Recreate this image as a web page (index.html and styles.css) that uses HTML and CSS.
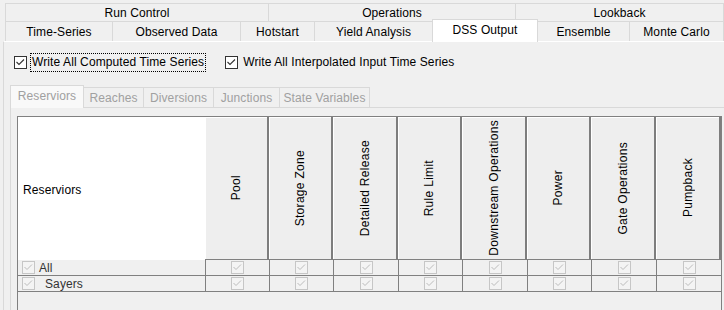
FILE: index.html
```html
<!DOCTYPE html>
<html>
<head>
<meta charset="utf-8">
<link rel="stylesheet" href="styles.css">
</head>
<body>
<div class="tabs">
  <div class="tab-row row1">
    <div class="tab">Run Control</div>
    <div class="tab">Operations</div>
    <div class="tab">Lookback</div>
  </div>
  <div class="tab-row row2">
    <div class="tab">Time-Series</div>
    <div class="tab">Observed Data</div>
    <div class="tab">Hotstart</div>
    <div class="tab">Yield Analysis</div>
    <div class="tab selected">DSS Output</div>
    <div class="tab">Ensemble</div>
    <div class="tab">Monte Carlo</div>
  </div>
</div>
<div class="panel">
  <div class="checks">
    <label class="chk">
      <span class="box"><svg width="13" height="13" viewBox="0 0 13 13"><polyline points="2.5,6 5,8.5 10,3.5" fill="none" stroke="#333" stroke-width="1.1"/></svg></span>
      <span class="lbl focus">Write All Computed Time Series</span>
    </label>
    <label class="chk">
      <span class="box"><svg width="13" height="13" viewBox="0 0 13 13"><polyline points="2.5,6 5,8.5 10,3.5" fill="none" stroke="#333" stroke-width="1.1"/></svg></span>
      <span class="lbl">Write All Interpolated Input Time Series</span>
    </label>
  </div>
  <div class="itabs">
    <div class="itab sel w1">Reserviors</div>
    <div class="itab w2">Reaches</div>
    <div class="itab w3">Diversions</div>
    <div class="itab w4">Junctions</div>
    <div class="itab w5">State Variables</div>
  </div>
  <div class="ipanel">
    <div class="scroll">
      <div class="grid">
        <div class="h first">Reserviors</div>
        <div class="h"><span class="vt">Pool</span></div>
        <div class="h"><span class="vt">Storage Zone</span></div>
        <div class="h"><span class="vt">Detailed Release</span></div>
        <div class="h"><span class="vt">Rule Limit</span></div>
        <div class="h"><span class="vt">Downstream Operations</span></div>
        <div class="h"><span class="vt">Power</span></div>
        <div class="h"><span class="vt">Gate Operations</span></div>
        <div class="h"><span class="vt">Pumpback</span></div>

        <div class="c first"><span class="dbox"><svg width="11" height="11" viewBox="0 0 11 11"><polyline points="1.5,5 4,7.5 9,2.5" fill="none" stroke="#bcbcbc" stroke-width="1"/></svg></span><span class="rtxt">All</span></div>
        <div class="c"><span class="dbox"><svg width="11" height="11" viewBox="0 0 11 11"><polyline points="1.5,5 4,7.5 9,2.5" fill="none" stroke="#bcbcbc" stroke-width="1"/></svg></span></div>
        <div class="c"><span class="dbox"><svg width="11" height="11" viewBox="0 0 11 11"><polyline points="1.5,5 4,7.5 9,2.5" fill="none" stroke="#bcbcbc" stroke-width="1"/></svg></span></div>
        <div class="c"><span class="dbox"><svg width="11" height="11" viewBox="0 0 11 11"><polyline points="1.5,5 4,7.5 9,2.5" fill="none" stroke="#bcbcbc" stroke-width="1"/></svg></span></div>
        <div class="c"><span class="dbox"><svg width="11" height="11" viewBox="0 0 11 11"><polyline points="1.5,5 4,7.5 9,2.5" fill="none" stroke="#bcbcbc" stroke-width="1"/></svg></span></div>
        <div class="c"><span class="dbox"><svg width="11" height="11" viewBox="0 0 11 11"><polyline points="1.5,5 4,7.5 9,2.5" fill="none" stroke="#bcbcbc" stroke-width="1"/></svg></span></div>
        <div class="c"><span class="dbox"><svg width="11" height="11" viewBox="0 0 11 11"><polyline points="1.5,5 4,7.5 9,2.5" fill="none" stroke="#bcbcbc" stroke-width="1"/></svg></span></div>
        <div class="c"><span class="dbox"><svg width="11" height="11" viewBox="0 0 11 11"><polyline points="1.5,5 4,7.5 9,2.5" fill="none" stroke="#bcbcbc" stroke-width="1"/></svg></span></div>
        <div class="c"><span class="dbox"><svg width="11" height="11" viewBox="0 0 11 11"><polyline points="1.5,5 4,7.5 9,2.5" fill="none" stroke="#bcbcbc" stroke-width="1"/></svg></span></div>

        <div class="c first"><span class="dbox"><svg width="11" height="11" viewBox="0 0 11 11"><polyline points="1.5,5 4,7.5 9,2.5" fill="none" stroke="#bcbcbc" stroke-width="1"/></svg></span><span class="rtxt indent">Sayers</span></div>
        <div class="c"><span class="dbox"><svg width="11" height="11" viewBox="0 0 11 11"><polyline points="1.5,5 4,7.5 9,2.5" fill="none" stroke="#bcbcbc" stroke-width="1"/></svg></span></div>
        <div class="c"><span class="dbox"><svg width="11" height="11" viewBox="0 0 11 11"><polyline points="1.5,5 4,7.5 9,2.5" fill="none" stroke="#bcbcbc" stroke-width="1"/></svg></span></div>
        <div class="c"><span class="dbox"><svg width="11" height="11" viewBox="0 0 11 11"><polyline points="1.5,5 4,7.5 9,2.5" fill="none" stroke="#bcbcbc" stroke-width="1"/></svg></span></div>
        <div class="c"><span class="dbox"><svg width="11" height="11" viewBox="0 0 11 11"><polyline points="1.5,5 4,7.5 9,2.5" fill="none" stroke="#bcbcbc" stroke-width="1"/></svg></span></div>
        <div class="c"><span class="dbox"><svg width="11" height="11" viewBox="0 0 11 11"><polyline points="1.5,5 4,7.5 9,2.5" fill="none" stroke="#bcbcbc" stroke-width="1"/></svg></span></div>
        <div class="c"><span class="dbox"><svg width="11" height="11" viewBox="0 0 11 11"><polyline points="1.5,5 4,7.5 9,2.5" fill="none" stroke="#bcbcbc" stroke-width="1"/></svg></span></div>
        <div class="c"><span class="dbox"><svg width="11" height="11" viewBox="0 0 11 11"><polyline points="1.5,5 4,7.5 9,2.5" fill="none" stroke="#bcbcbc" stroke-width="1"/></svg></span></div>
        <div class="c"><span class="dbox"><svg width="11" height="11" viewBox="0 0 11 11"><polyline points="1.5,5 4,7.5 9,2.5" fill="none" stroke="#bcbcbc" stroke-width="1"/></svg></span></div>
      </div>
    </div>
  </div>
</div>
</body>
</html>
```
FILE: styles.css
```css
* { box-sizing: border-box; }
html, body { margin: 0; }
body {
  width: 724px;
  height: 310px;
  overflow: hidden;
  background: #f0f0f0;
  font-family: "Liberation Sans", Arial, sans-serif;
  font-size: 12px;
  letter-spacing: 0.1px;
  color: #000;
  display: flex;
  flex-direction: column;
}
.tabs { padding: 3px 0 0 5px; }
.tab-row { display: grid; border-left: 1px solid #d9d9d9; }
.row1 { grid-template-columns: 263px 247px 1fr; height: 18px; }
.row2 { grid-template-columns: 107px 128px 74px 118px 105px 92px 1fr; height: 20px; }
.tab {
  border-top: 1px solid #d9d9d9;
  border-right: 1px solid #d9d9d9;
  display: flex;
  align-items: center;
  justify-content: center;
  white-space: nowrap;
}
.tab.selected {
  position: relative;
  z-index: 1;
  background: #fff;
  margin: -2px 0 -1px -1px;
  border-left: 1px solid #d9d9d9;
  padding-bottom: 2px;
}
.panel {
  flex: 1;
  margin-left: 3px;
  border-top: 1px solid #fff;
  border-left: 1px solid #d9d9d9;
  display: flex;
  flex-direction: column;
  min-height: 0;
}
.checks {
  display: flex;
  align-items: center;
  height: 17px;
  margin-top: 12px;
  padding-left: 10px;
  gap: 19px;
}
.chk { display: flex; align-items: center; gap: 3px; }
.box {
  width: 13px;
  height: 13px;
  border: 1px solid #333;
  background: #fff;
  display: flex;
  align-items: center;
  justify-content: center;
}
.box svg { display: block; flex: none; }
.lbl { padding: 1px 1px 2px; line-height: 14px; border: 1px solid transparent; }
.lbl.focus { border: 1px dotted #000; }
.itabs {
  display: flex;
  align-items: flex-end;
  height: 22px;
  margin: 14px 0 0 6px;
  position: relative;
  z-index: 1;
}
.itab {
  height: 20px;
  border-top: 1px solid #d9d9d9;
  border-right: 1px solid #d9d9d9;
  color: #a0a0a0;
  display: flex;
  align-items: center;
  justify-content: center;
  white-space: nowrap;
  padding-top: 1px;
}
.itab.sel {
  height: 23px;
  margin-bottom: -1px;
  background: #f9f9f9;
  border-left: 1px solid #d9d9d9;
  padding-top: 0;
  padding-bottom: 2px;
}
.w1 { width: 74px; }
.w2 { width: 60px; }
.w3 { width: 70px; }
.w4 { width: 66px; }
.w5 { width: 90px; }
.ipanel {
  flex: 1;
  margin-left: 6px;
  border-top: 1px solid #d9d9d9;
  border-left: 1px solid #d9d9d9;
  padding: 8px 0 0 6px;
  display: flex;
  flex-direction: column;
  min-height: 0;
}
.scroll {
  flex: 1;
  width: 705px;
  border: 1px solid #808080;
  border-bottom: none;
  background: #f0f0f0;
}
.grid {
  display: grid;
  grid-template-columns: 187px 64px 64px 65px 64px 65px 64px 65px 65px;
  grid-template-rows: 143px 16px 16px;
}
.h {
  background: #eeeeee;
  border-right: 2px solid #7d7d7d;
  border-bottom: 1px solid #808080;
  box-shadow: inset 1px 1px 0 #fff;
  display: flex;
  align-items: center;
  justify-content: center;
}
.h.first {
  background: #fff;
  border: none;
  box-shadow: none;
  justify-content: flex-start;
  padding-left: 5px;
  padding-top: 3px;
}
.vt {
  writing-mode: vertical-rl;
  transform: rotate(180deg);
  white-space: nowrap;
  letter-spacing: 0.3px;
}
.c {
  border-left: 1px solid #808080;
  border-bottom: 1px solid #808080;
  display: flex;
  align-items: center;
  justify-content: center;
}
.c.first {
  border-left: none;
  justify-content: flex-start;
  padding-left: 4px;
  color: #333;
}
.dbox {
  width: 13px;
  height: 13px;
  border: 1px solid #c6c6c6;
  background: #f4f4f4;
  display: flex;
  align-items: center;
  justify-content: center;
}
.dbox svg { display: block; flex: none; }
.rtxt { margin-left: 4px; }
.rtxt.indent { margin-left: 10px; }
```
